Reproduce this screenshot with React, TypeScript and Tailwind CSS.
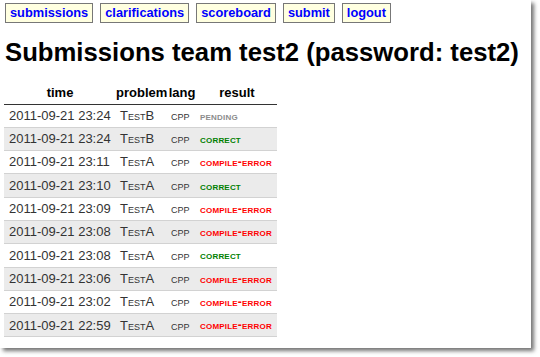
const navItems = ['submissions', 'clarifications', 'scoreboard', 'submit', 'logout'];

type Submission = {
  time: string;
  problem: string;
  result: 'pending' | 'correct' | 'compile-error';
};

const submissions: Submission[] = [
  { time: '2011-09-21 23:24', problem: 'TestB', result: 'pending' },
  { time: '2011-09-21 23:24', problem: 'TestB', result: 'correct' },
  { time: '2011-09-21 23:11', problem: 'TestA', result: 'compile-error' },
  { time: '2011-09-21 23:10', problem: 'TestA', result: 'correct' },
  { time: '2011-09-21 23:09', problem: 'TestA', result: 'compile-error' },
  { time: '2011-09-21 23:08', problem: 'TestA', result: 'compile-error' },
  { time: '2011-09-21 23:08', problem: 'TestA', result: 'correct' },
  { time: '2011-09-21 23:06', problem: 'TestA', result: 'compile-error' },
  { time: '2011-09-21 23:02', problem: 'TestA', result: 'compile-error' },
  { time: '2011-09-21 22:59', problem: 'TestA', result: 'compile-error' },
];

const resultColor: Record<Submission['result'], string> = {
  pending: 'text-[#8c8c8c]',
  correct: 'text-[#008000]',
  'compile-error': 'text-[#ff0000]',
};

export default function App() {
  return (
    <div className="w-[540px] h-[357px] bg-white font-['Liberation_Sans',Arial,sans-serif]">
      <div className="w-[531px] h-[348px] bg-white shadow-[3px_3px_4px_rgba(0,0,0,0.55)] px-[5px] pt-[3px]">
        <nav className="flex gap-[7px]">
          {navItems.map((item) => (
            <a
              key={item}
              href="#"
              className="h-[20px] px-[4px] border border-[#777] bg-[#ffffe0] text-[12.8px] font-bold leading-[18px] text-[#0000ff]"
            >
              {item}
            </a>
          ))}
        </nav>

        <h1 className="mt-[13px] text-[25.7px] font-bold leading-[32px] text-black">
          Submissions team test2 (password: test2)
        </h1>

        <table className="mt-[17px] -ml-px border-collapse table-fixed w-[273px] text-[13px]">
          <colgroup>
            <col className="w-[112px]" />
            <col className="w-[51px]" />
            <col className="w-[30px]" />
            <col className="w-[80px]" />
          </colgroup>
          <thead>
            <tr className="border-b border-[#333]">
              <th className="h-[19px] text-center font-bold leading-[16px] pb-[2px]">time</th>
              <th className="text-center font-bold leading-[16px] pb-[2px]">problem</th>
              <th className="text-center font-bold leading-[16px] pb-[2px]">lang</th>
              <th className="text-center font-bold leading-[16px] pb-[2px]">result</th>
            </tr>
          </thead>
          <tbody>
            {submissions.map((s, i) => (
              <tr
                key={i}
                className={`h-[23.3px] border-b border-[#d2d2d2] ${i % 2 === 1 ? 'bg-[#ebebeb]' : 'bg-white'}`}
              >
                <td className="pl-[5px] text-[#333] whitespace-nowrap">{s.time}</td>
                <td className="pl-[4px] text-[#333] [font-variant:small-caps]">{s.problem}</td>
                <td className="pl-[4px] text-[13px] text-[#333] [font-variant:small-caps]">cpp</td>
                <td className={`pl-[3px] text-[12px] font-bold tracking-[0.2px] whitespace-nowrap [font-variant:small-caps] ${resultColor[s.result]}`}>
                  {s.result}
                </td>
              </tr>
            ))}
          </tbody>
        </table>
      </div>
    </div>
  );
}
